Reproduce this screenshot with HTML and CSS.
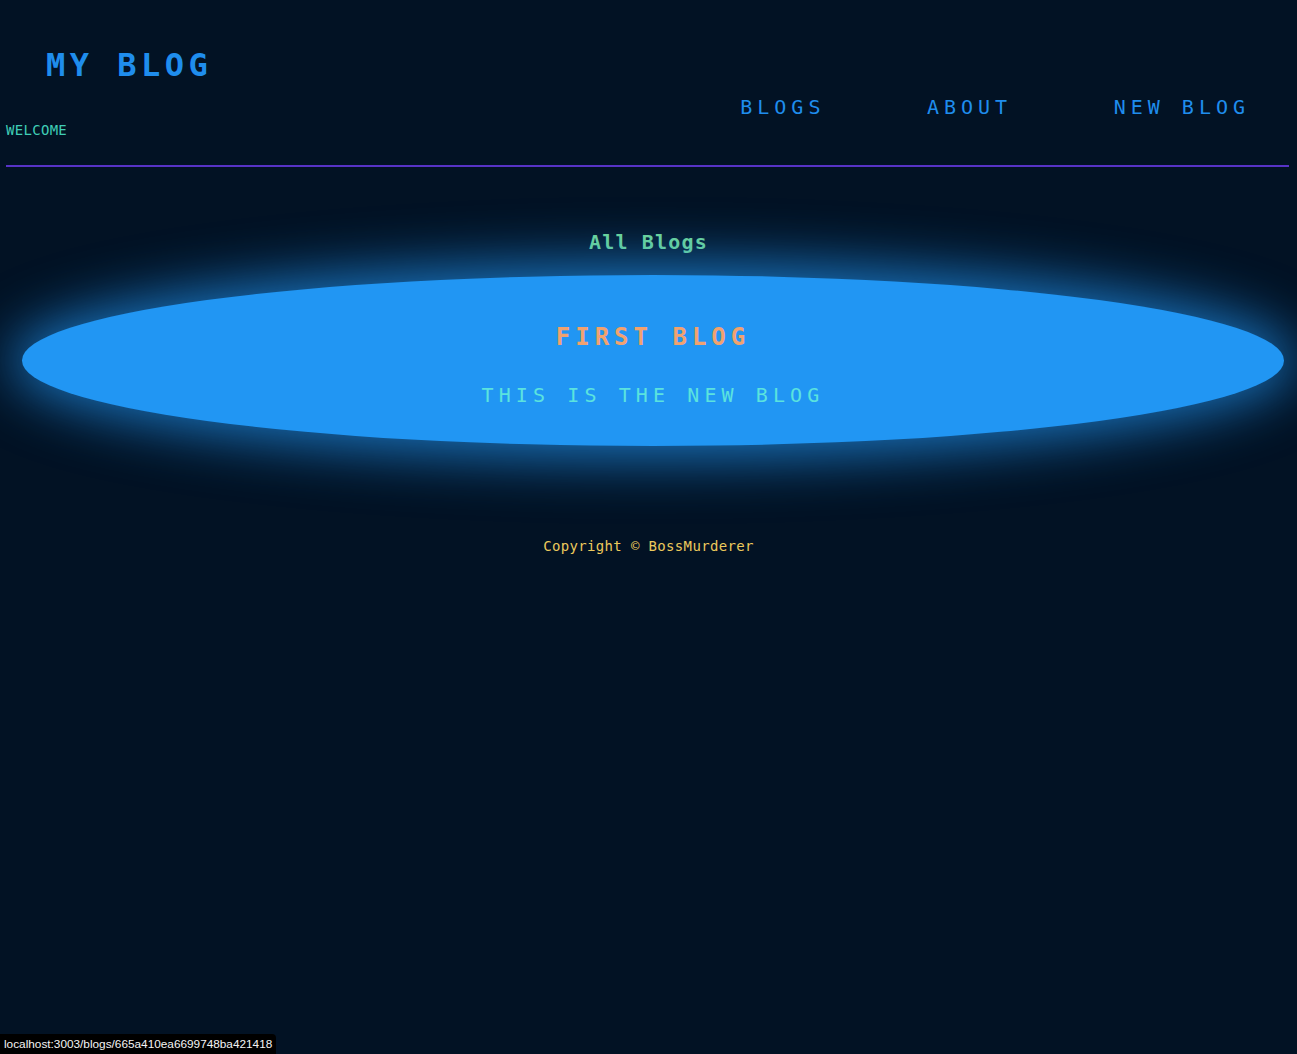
FILE: index.html
```html
<!DOCTYPE html>
<html lang="en">
<head>
<meta charset="utf-8">
<title>My Blog</title>
<link rel="stylesheet" href="styles.css">
</head>
<body>
<header class="site-header">
  <div class="brand">
    <h1 class="brand-title">MY BLOG</h1>
    <p class="brand-welcome">WELCOME</p>
  </div>
  <nav class="nav">
    <a class="nav-link" href="#">BLOGS</a>
    <a class="nav-link" href="#">ABOUT</a>
    <a class="nav-link" href="#">NEW BLOG</a>
  </nav>
</header>
<main class="content">
  <h2 class="section-title">All Blogs</h2>
  <a class="blog-card" href="#">
    <h3 class="blog-title">FIRST BLOG</h3>
    <p class="blog-snippet">THIS IS THE NEW BLOG</p>
  </a>
</main>
<footer class="site-footer">Copyright © BossMurderer</footer>
<div class="status-bar">localhost:3003/blogs/665a410ea6699748ba421418</div>
</body>
</html>
```

FILE: styles.css
```css
html, body {
  margin: 0;
  padding: 0;
  background: #021224;
  min-height: 100%;
}
body {
  font-family: "DejaVu Sans Mono", "Liberation Mono", monospace;
  height: 1054px;
  overflow: hidden;
}
a { text-decoration: none; }

.site-header {
  display: flex;
  justify-content: space-between;
  align-items: flex-start;
  margin: 0 8px 0 6px;
  padding-bottom: 28px;
  border-bottom: 2px solid #5733c6;
}
.brand-title {
  margin: 49px 0 0 40px;
  font-size: 32px;
  line-height: 32px;
  font-weight: bold;
  letter-spacing: 4.5px;
  color: #1f8ded;
}
.brand-welcome {
  margin: 42px 0 0 0;
  font-size: 14px;
  line-height: 14px;
  letter-spacing: 0.3px;
  color: #3fcdb6;
}
.nav {
  display: flex;
  gap: 101.5px;
  margin-top: 97px;
  padding-right: 39px;
}
.nav-link {
  font-size: 20px;
  line-height: 20px;
  letter-spacing: 5px;
  color: #1f8ded;
}

.content {
  display: flex;
  flex-direction: column;
  align-items: flex-start;
}
.section-title {
  align-self: center;
  margin: 65px 0 0 0;
  font-size: 20px;
  line-height: 20px;
  font-weight: bold;
  letter-spacing: 1.2px;
  color: #72d993;
}
.blog-card {
  display: flex;
  flex-direction: column;
  align-items: center;
  box-sizing: border-box;
  width: 1262px;
  height: 171px;
  margin: 23px 0 0 22px;
  padding-top: 50px;
  border-radius: 50%;
  background: #2196f3;
  box-shadow: 0 0 55px 12px rgba(33, 150, 243, 0.75);
}
.blog-title {
  margin: 0;
  font-size: 24px;
  line-height: 24px;
  font-weight: bold;
  letter-spacing: 5px;
  color: #f1a26f;
}
.blog-snippet {
  margin: 36px 0 0 0;
  font-size: 20px;
  line-height: 20px;
  letter-spacing: 5.1px;
  color: #5be3de;
}

.site-footer {
  margin-top: 93px;
  text-align: center;
  font-size: 14px;
  line-height: 14px;
  letter-spacing: 0.35px;
  color: #ecc95c;
}

.status-bar {
  position: fixed;
  left: 0;
  bottom: 0;
  height: 20px;
  padding: 0 4px 0 4px;
  background: #000;
  border-top-right-radius: 4px;
  font-family: "Liberation Sans", Arial, sans-serif;
  font-size: 11.8px;
  line-height: 20px;
  color: #f4f4f4;
}
```
